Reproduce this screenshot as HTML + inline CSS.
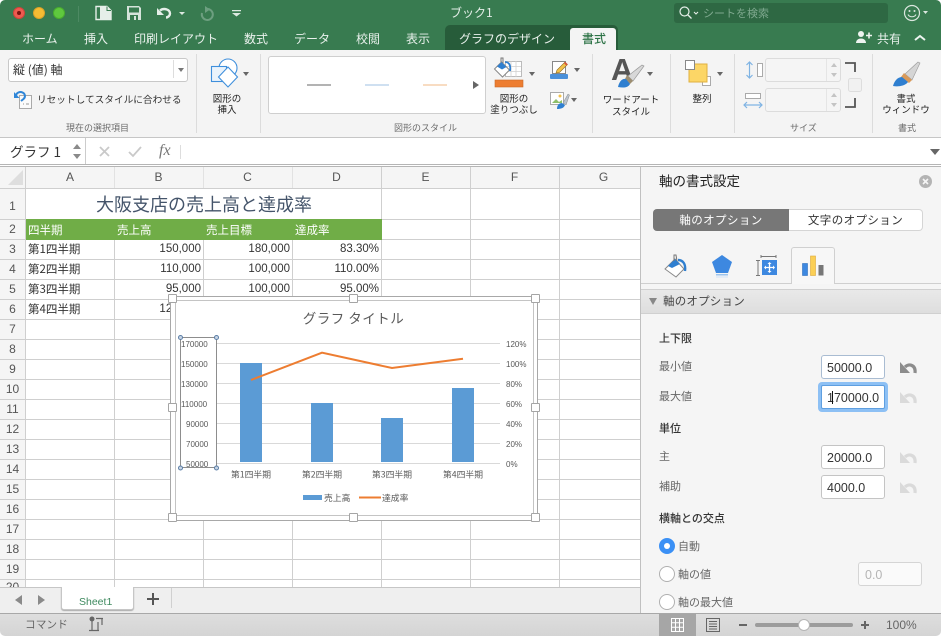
<!DOCTYPE html>
<html lang="ja"><head><meta charset="utf-8">
<style>
html,body{margin:0;padding:0;width:941px;height:636px;overflow:hidden;background:#fff}
*{box-sizing:border-box}
body{font-family:"Liberation Sans","Noto Sans CJK JP",sans-serif;position:relative;color:#333}
.a{position:absolute}
.t{position:absolute;white-space:nowrap;line-height:1}
.j{font-family:"Noto Sans CJK JP",sans-serif}
.tab{position:absolute;top:32px;font:12px/14px "Noto Sans CJK JP",sans-serif;color:#e9f1ec;white-space:nowrap}
.rl{position:absolute;font:9.500px/11px "Noto Sans CJK JP",sans-serif;color:#222;text-align:center;white-space:nowrap}
.gl{position:absolute;top:121px;font:9px/13px "Noto Sans CJK JP",sans-serif;color:#6a6a6a;white-space:nowrap}
.sep{position:absolute;top:54px;height:79px;width:1px;background:#dcdcdc}
.ch{position:absolute;top:167px;height:21px;font:12px/21px "Liberation Sans",sans-serif;color:#555;text-align:center}
.rn{position:absolute;left:0;width:25px;text-align:center;font:12px/20px "Liberation Sans",sans-serif;color:#555}
.c{position:absolute;font:11.500px/20px "Noto Sans CJK JP","Liberation Sans",sans-serif;color:#333;white-space:nowrap;height:20px}
.n{font-family:"Liberation Sans",sans-serif;text-align:right;width:87px;font-size:11.500px}
.lab{position:absolute;left:660px;font:11px/14px "Noto Sans CJK JP",sans-serif;color:#666;white-space:nowrap}
.hd{position:absolute;left:659px;font:500 11px/14px "Noto Sans CJK JP",sans-serif;color:#333;white-space:nowrap}
.inp{position:absolute;left:821px;width:64px;height:24px;background:#fff;border:1px solid #c4c4c4;border-radius:3px;font:12.500px/24px "Liberation Sans",sans-serif;color:#333;padding-left:5px;white-space:nowrap;overflow:hidden}
.hand{position:absolute;width:9px;height:9px;background:#fff;border:1px solid #a5a5a5;border-radius:1px}
.rad{position:absolute;left:659px;width:16px;height:16px;border-radius:50%;background:#fff;border:1px solid #b0b0b0}
.sp{position:absolute;width:76px;height:24px;background:#f5f5f5;border:1px solid #dcdcdc;border-radius:3px}
</style></head><body>

<!-- title + tab bar -->
<div class="a" style="left:0;top:0;width:941px;height:50px;background:#387b50;border-radius:5px 5px 0 0"></div>
<div class="a" style="left:13px;top:7px;width:12px;height:12px;border-radius:50%;background:#ee5a50;border:1px solid #d2433a"></div>
<div class="a" style="left:17px;top:11px;width:4px;height:4px;border-radius:50%;background:#7a1410"></div>
<div class="a" style="left:33px;top:7px;width:12px;height:12px;border-radius:50%;background:#f5bc33;border:1px solid #dca228"></div>
<div class="a" style="left:53px;top:7px;width:12px;height:12px;border-radius:50%;background:#5fc83e;border:1px solid #4aad2e"></div>
<div class="a" style="left:78px;top:6px;width:1px;height:16px;background:#4d8a63"></div>
<svg class="a" style="left:90px;top:0" width="160" height="28" viewBox="90 0 160 28" fill="none">
<path d="M100 6.500h7l4 4v9h-11z" fill="#e6efe9"/>
<path d="M96 6.500h11l4 4v9h-15z" stroke="#e6efe9" stroke-width="1.400"/><path d="M107 6.500v4h4" stroke="#387b50" stroke-width="1"/>
<path d="M98 9.500v.01M98 12.500v.01M98 15.500v.01" stroke="#e6efe9" stroke-width="1.400"/>
<path d="M127 6h12l2 2v12h-14z" fill="#d5e3da"/><rect x="129" y="7.500" width="10" height="5" fill="#387b50"/><rect x="130" y="15" width="8" height="5" fill="#387b50"/><rect x="134" y="16" width="2" height="4" fill="#d5e3da"/>
<path d="M160 10.500c4-3 10-1 10 3 0 2-2 4-4 4" stroke="#e6efe9" stroke-width="2.400"/><path d="M157 8v7h7z" fill="#e6efe9"/>
<path d="M179 12h6l-3 3z" fill="#dce8e0"/>
<path d="M202 13a5.500 5.500 0 1 0 6-4" stroke="#6d9f80" stroke-width="2"/><path d="M205 6v7l5-3.500z" fill="#6d9f80"/>
<path d="M232 10h9v1.200h-9zM232 13h9l-4.500 3.500z" fill="#dce8e0"/>
</svg>
<div class="t j" style="left:450px;top:7px;font-size:12px;color:#e5efe9">ブック1</div>
<div class="a" style="left:674px;top:3px;width:214px;height:20px;background:#2e6843;border-radius:3px"></div>
<svg class="a" style="left:678px;top:5px" width="22" height="16" fill="none"><circle cx="6.500" cy="6.500" r="4.500" stroke="#e6efe9" stroke-width="1.200"/><path d="M10 10l3.500 3.500" stroke="#e6efe9" stroke-width="1.300"/><path d="M16 7l2 2 2-2" stroke="#e6efe9" stroke-width="1.100"/></svg>
<div class="t j" style="left:703px;top:8px;font-size:11px;color:#7fa98f">シートを検索</div>
<svg class="a" style="left:903px;top:4px" width="34" height="18" fill="none"><circle cx="9" cy="9" r="7.500" stroke="#dbe7df" stroke-width="1.200"/><circle cx="6.500" cy="7" r="1" fill="#dbe7df"/><circle cx="11.500" cy="7" r="1" fill="#dbe7df"/><path d="M5 10.500c1.500 3 6.500 3 8 0" stroke="#dbe7df" stroke-width="1.100"/><path d="M20 7h5l-2.500 3z" fill="#dbe7df"/></svg>

<div class="tab" style="left:22px">ホーム</div>
<div class="tab" style="left:84px">挿入</div>
<div class="tab" style="left:134px">印刷レイアウト</div>
<div class="tab" style="left:244px">数式</div>
<div class="tab" style="left:294px">データ</div>
<div class="tab" style="left:356px">校閲</div>
<div class="tab" style="left:406px">表示</div>
<div class="a" style="left:445px;top:25px;width:173px;height:25px;background:#275c3a;border-radius:5px 5px 0 0"></div>
<div class="tab" style="left:459px">グラフのデザイン</div>
<div class="a" style="left:570px;top:28px;width:46px;height:22px;background:#f4f4f4;border-radius:3px 3px 0 0"></div>
<div class="tab" style="left:582px;color:#2f7448;font-weight:500">書式</div>
<svg class="a" style="left:855px;top:30px" width="18" height="14"><circle cx="6" cy="4" r="3" fill="#eef4f0"/><path d="M1 13c0-6 10-6 10 0z" fill="#eef4f0"/><path d="M11 5.500h6M14 2.500v6" stroke="#eef4f0" stroke-width="1.600"/></svg>
<div class="tab" style="left:877px">共有</div>
<svg class="a" style="left:913px;top:33px" width="14" height="9" fill="none"><path d="M2 7l5-4 5 4" stroke="#eef4f0" stroke-width="2"/></svg>

<!-- ribbon -->
<div class="a" style="left:0;top:50px;width:941px;height:88px;background:#f4f4f4;border-bottom:1px solid #c6c6c6"></div>
<div class="sep" style="left:196px"></div><div class="sep" style="left:260px"></div><div class="sep" style="left:592px"></div><div class="sep" style="left:670px"></div><div class="sep" style="left:734px"></div><div class="sep" style="left:872px"></div>

<div class="a" style="left:8px;top:58px;width:180px;height:24px;background:#fff;border:1px solid #c8c8c8;border-radius:3px"></div>
<div class="a" style="left:173px;top:60px;width:1px;height:18px;background:#ddd"></div>
<div class="a" style="left:178px;top:68px;border:3.500px solid transparent;border-top:4px solid #777;border-bottom:0"></div>
<div class="t j" style="left:13px;top:64px;font-size:12px;color:#333">縦 (値) 軸</div>
<svg class="a" style="left:13px;top:90px" width="20" height="20" fill="none"><rect x="6.500" y="5.500" width="12" height="13" fill="#fbfbfb" stroke="#aaa"/><path d="M10 14h1M13 14h3" stroke="#999"/><path d="M3 5.500a4.500 4 0 1 1 7.500 3.500L8 11" stroke="#2f86d8" stroke-width="2"/><path d="M1 2v6h5.500z" fill="#2f86d8"/></svg>
<div class="t j" style="left:37px;top:95px;font-size:9.670px;color:#333">リセットしてスタイルに合わせる</div>
<div class="gl" style="left:66px">現在の選択項目</div>

<svg class="a" style="left:208px;top:57px" width="40" height="34" fill="none"><circle cx="20" cy="11" r="9" fill="#fff" stroke="#3f8fdc" stroke-width="1.100"/><rect x="3.500" y="9.500" width="15" height="15" fill="#eaf3fb" stroke="#3f8fdc" stroke-width="1.100"/><path d="M20 10l9.500 10L20 30 10.500 20z" fill="#fff" stroke="#3f8fdc" stroke-width="1.100"/></svg>
<div class="a" style="left:243px;top:72px;border:3px solid transparent;border-top:4px solid #666;border-bottom:0"></div>
<div class="rl" style="left:208px;top:92.500px;width:38px">図形の<br>挿入</div>

<div class="a" style="left:268px;top:56px;width:218px;height:58px;background:#fff;border:1px solid #cfcfcf;border-radius:3px"></div>
<div class="a" style="left:307px;top:84px;width:24px;height:2px;background:#b3b3b3"></div>
<div class="a" style="left:365px;top:84px;width:24px;height:2px;background:#cfe0f1"></div>
<div class="a" style="left:423px;top:84px;width:24px;height:2px;background:#f8dcc2"></div>
<div class="a" style="left:473px;top:81px;border:4px solid transparent;border-left:6px solid #666;border-right:0;height:8px"></div>
<div class="gl" style="left:394px">図形のスタイル</div>

<svg class="a" style="left:493px;top:56px" width="34" height="32" fill="none"><rect x="12.500" y="5.500" width="16" height="15" fill="#fff" stroke="#bbb"/><path d="M12 10.500h16M12 15.500h16M18 5v16M23 5v16" stroke="#d0d0d0" stroke-width=".8"/><path d="M1.500 13l7-7 8 8-7 7z" fill="#fff" stroke="#888"/><path d="M4 10.500l4.500-4.500 5 5-4.500 2.500z" fill="#2f7fd0"/><path d="M8 6V2h2v5" stroke="#777"/><path d="M12 6c4 0 6 3 5 9" stroke="#2f7fd0" stroke-width="1.800"/><rect x="2" y="24" width="28" height="7" fill="#ed7d31" stroke="#c96a28" stroke-width=".6"/></svg>
<div class="a" style="left:529px;top:72px;border:3px solid transparent;border-top:4px solid #666;border-bottom:0"></div>
<div class="rl" style="left:483px;top:92.500px;width:62px">図形の<br>塗りつぶし</div>
<svg class="a" style="left:549px;top:59px" width="22" height="22" fill="none"><path d="M3.500 2.500h13v12h-13z" fill="#fff" stroke="#888"/><path d="M7 14l1-3 8-8 2.500 2.500-8 8z" fill="#f2c14a" stroke="#8a6a20" stroke-width=".6"/><path d="M15.500 3.500l2.500 2.500" stroke="#d5533d" stroke-width="1.800"/><rect x="1" y="15" width="18" height="5" rx="1" fill="#4a90d9"/></svg>
<div class="a" style="left:574px;top:68px;border:3px solid transparent;border-top:4px solid #666;border-bottom:0"></div>
<svg class="a" style="left:549px;top:90px" width="24" height="20" fill="none"><rect x="1.500" y="2.500" width="13" height="12" fill="#fff" stroke="#aaa"/><path d="M3 13l4-4 3 3 3-2v3z" fill="#8fbf6a"/><circle cx="11" cy="6" r="1.500" fill="#f2c14a"/><path d="M8 19c0-4 2-6 5-6l3 2c-1 3-4 4-8 4z" fill="#2f7fd0"/><path d="M14 13l5-9 1.500 1-3.500 10z" fill="#b9c2cc" stroke="#888" stroke-width=".5"/></svg>
<div class="a" style="left:571px;top:98px;border:3px solid transparent;border-top:4px solid #666;border-bottom:0"></div>

<div class="t" style="left:611px;top:54px;font-size:31px;line-height:31px;color:#555;font-weight:700">A</div>
<svg class="a" style="left:615px;top:62px" width="32" height="28"><path d="M13 14L27 3l2 1-11 15z" fill="#d8d8d8" stroke="#999" stroke-width=".7"/><path d="M12 13l6 6-3 3-5-5z" fill="#9c8d70"/><path d="M3 25c1-5 4-9 8-8l4 5c-2 4-7 4-12 3z" fill="#2f7fd0"/></svg>
<div class="a" style="left:647px;top:72px;border:3px solid transparent;border-top:4px solid #666;border-bottom:0"></div>
<div class="rl" style="left:596px;top:93px;width:70px;line-height:12px">ワードアート<br>スタイル</div>

<svg class="a" style="left:684px;top:59px" width="34" height="28"><rect x="18.500" y="17.500" width="8" height="9" fill="#fff" stroke="#aaa"/><rect x="5" y="5" width="18" height="18" fill="#fcd666" stroke="#e0b040"/><rect x="1.500" y="1.500" width="9" height="9" fill="#fff" stroke="#888"/></svg>
<div class="a" style="left:717px;top:72px;border:3px solid transparent;border-top:4px solid #666;border-bottom:0"></div>
<div class="rl" style="left:680px;top:93px;width:44px">整列</div>

<svg class="a" style="left:744px;top:60px" width="20" height="20" fill="none"><path d="M5.500 2v16M2.500 5l3-3 3 3M2.500 15l3 3 3-3" stroke="#7fb3e3" stroke-width="1.200"/><rect x="13.500" y="3.500" width="5" height="13" fill="#fff" stroke="#aaa"/></svg>
<svg class="a" style="left:743px;top:91px" width="22" height="20" fill="none"><rect x="2.500" y="2.500" width="15" height="5" fill="#fff" stroke="#aaa"/><path d="M1 14h18M4 11l-3 3 3 3M16 11l3 3-3 3" stroke="#7fb3e3" stroke-width="1.200"/></svg>
<div class="sp" style="left:765px;top:58px"></div><div class="sp" style="left:765px;top:88px"></div>
<div class="a" style="left:826px;top:59px;width:1px;height:22px;background:#e5e5e5"></div><div class="a" style="left:826px;top:89px;width:1px;height:22px;background:#e5e5e5"></div>
<svg class="a" style="left:829px;top:62px" width="10" height="48"><path d="M2 5l3-4 3 4zM2 11l3 4 3-4zM2 35l3-4 3 4zM2 41l3 4 3-4z" fill="#c4c4c4"/></svg>
<svg class="a" style="left:844px;top:60px" width="30" height="50" fill="none"><path d="M1 3h10v9M1 47h10v-9" stroke="#555" stroke-width="1.800"/><rect x="4.500" y="18.500" width="13" height="13" rx="2" fill="#f1f1f1" stroke="#ddd"/></svg>
<svg class="a" style="left:891px;top:60px" width="34" height="28"><path d="M14 14L27 2l2 1-8 17z" fill="#d5d5d5" stroke="#999" stroke-width=".6"/><path d="M13 13l8 7-3 3-8-6z" fill="#d99a5a"/><path d="M2 26c1-4 4-9 9-9l6 5c-3 4-10 5-15 4z" fill="#2f7fd0"/></svg>
<div class="rl" style="left:876px;top:92.500px;width:60px">書式<br>ウィンドウ</div>
<div class="gl" style="left:790px">サイズ</div>
<div class="gl" style="left:898px">書式</div>

<!-- formula bar -->
<div class="a" style="left:0;top:138px;width:941px;height:26px;background:#fff"></div>
<div class="a" style="left:85px;top:138px;width:1px;height:26px;background:#ccc"></div>
<div class="t j" style="left:10px;top:145px;font-size:13.500px;color:#333">グラフ 1</div>
<svg class="a" style="left:71px;top:143px" width="12" height="18"><path d="M2 6l4-5 4 5zM2 11l4 5 4-5z" fill="#8a8a8a"/></svg>
<svg class="a" style="left:96px;top:144px" width="50" height="16" fill="none"><path d="M4 3l9 9M13 3l-9 9" stroke="#c9c9c9" stroke-width="1.800"/><path d="M33 8l4 4 8-9" stroke="#c9c9c9" stroke-width="1.800"/></svg>
<div class="t" style="left:159px;top:142px;font:italic 16px 'Liberation Serif',serif;color:#777">fx</div>
<div class="a" style="left:180px;top:145px;width:1px;height:14px;background:#ddd"></div>
<div class="a" style="left:930px;top:149px;border:5px solid transparent;border-top:6px solid #666;border-bottom:0;height:6px"></div>
<div class="a" style="left:0;top:164px;width:941px;height:3px;background:#fff;border-top:1px solid #b5b5b5;border-bottom:1px solid #b5b5b5"></div>

<!-- sheet -->
<div class="a" style="left:0;top:167px;width:640px;height:420px;background:#fff;overflow:hidden">
<svg class="a" style="left:0;top:0" width="640" height="420">
<rect width="640" height="21" fill="#f5f5f5"/><rect width="25" height="420" fill="#f5f5f5"/>
<path d="M8 18L23 3v15z" fill="#dedede"/>
<g stroke="#cfcfcf" shape-rendering="crispEdges">
<path d="M0 21.500h640M25.500 0v420"/>
<path d="M381.500 0v420M470.500 0v420M559.500 0v420"/>
<path d="M114.500 0v21M203.500 0v21M292.500 0v21" stroke="#e2e2e2"/>
<path d="M114.500 72v348M203.500 72v348M292.500 72v348"/>
<path d="M381 52.500h259M0 72.500h640M0 92.500h640M0 112.500h640M0 132.500h640M0 152.500h640M0 172.500h640M0 192.500h640M0 212.500h640M0 232.500h640M0 252.500h640M0 272.500h640M0 292.500h640M0 312.500h640M0 332.500h640M0 352.500h640M0 372.500h640M0 392.500h640M0 412.500h640"/>
<path d="M0 52.500h25"/>
</g>
<rect x="26" y="52" width="356" height="21" fill="#70ad47"/>
</svg>
</div>
<div class="ch" style="left:26px;width:88px">A</div><div class="ch" style="left:114px;width:89px">B</div><div class="ch" style="left:203px;width:89px">C</div><div class="ch" style="left:292px;width:89px">D</div><div class="ch" style="left:381px;width:89px">E</div><div class="ch" style="left:470px;width:89px">F</div><div class="ch" style="left:559px;width:89px">G</div>
<div class="rn" style="top:196px">1</div><div class="rn" style="top:219px">2</div><div class="rn" style="top:239px">3</div><div class="rn" style="top:259px">4</div><div class="rn" style="top:279px">5</div><div class="rn" style="top:299px">6</div><div class="rn" style="top:319px">7</div><div class="rn" style="top:339px">8</div><div class="rn" style="top:359px">9</div><div class="rn" style="top:379px">10</div><div class="rn" style="top:399px">11</div><div class="rn" style="top:419px">12</div><div class="rn" style="top:439px">13</div><div class="rn" style="top:459px">14</div><div class="rn" style="top:479px">15</div><div class="rn" style="top:499px">16</div><div class="rn" style="top:519px">17</div><div class="rn" style="top:539px">18</div><div class="rn" style="top:559px">19</div><div class="rn" style="top:577px;height:10px;overflow:hidden">20</div>

<div class="t j" style="left:26px;top:195px;width:356px;text-align:center;font-size:18px;color:#44546a">大阪支店の売上高と達成率</div>
<div class="c" style="left:28px;top:220px;color:#fff">四半期</div><div class="c" style="left:117px;top:220px;color:#fff">売上高</div><div class="c" style="left:206px;top:220px;color:#fff">売上目標</div><div class="c" style="left:295px;top:220px;color:#fff">達成率</div>
<div class="c" style="left:28px;top:239px">第1四半期</div><div class="c" style="left:28px;top:259px">第2四半期</div><div class="c" style="left:28px;top:279px">第3四半期</div><div class="c" style="left:28px;top:299px">第4四半期</div>
<div class="c n" style="left:114px;top:239px">150,000</div><div class="c n" style="left:203px;top:239px">180,000</div><div class="c n" style="left:292px;top:239px">83.30%</div>
<div class="c n" style="left:114px;top:259px">110,000</div><div class="c n" style="left:203px;top:259px">100,000</div><div class="c n" style="left:292px;top:259px">110.00%</div>
<div class="c n" style="left:114px;top:279px">95,000</div><div class="c n" style="left:203px;top:279px">100,000</div><div class="c n" style="left:292px;top:279px">95.00%</div>
<div class="c n" style="left:114px;top:299px">125,000</div>

<!-- chart -->
<div class="a" style="left:170px;top:296px;width:368px;height:225px;background:#fff;border:1px solid #a8a8a8"></div>
<div class="a" style="left:175px;top:300px;width:359px;height:216px;background:#fff;border:1px solid #c4c4c4"></div>
<svg class="a" style="left:165px;top:290px" width="380" height="235">
<g stroke="#d9d9d9"><path d="M52 53.500h283M52 73.500h283M52 93.500h283M52 113.500h283M52 133.500h283M52 153.500h283M52 173.500h283"/></g>
<g fill="#5b9bd5"><rect x="75" y="73" width="22" height="99"/><rect x="146" y="113" width="22" height="59"/><rect x="216" y="128" width="22" height="44"/><rect x="287" y="98" width="22" height="74"/></g>
<polyline points="86,90 157,62.700 227,78 298,68.700" fill="none" stroke="#ed7d31" stroke-width="2"/>
<rect x="15.500" y="47.500" width="36" height="130" fill="none" stroke="#8d8d8d" stroke-width="1"/>
<g fill="#c9d6e6" stroke="#5b7ea6"><circle cx="15.500" cy="47.500" r="2"/><circle cx="51.500" cy="47.500" r="2"/><circle cx="15.500" cy="178" r="2"/><circle cx="51.500" cy="178" r="2"/></g>
<g font-family="Liberation Sans,sans-serif" font-size="8" fill="#595959">
<text x="16" y="57">170000</text><text x="16" y="77">150000</text><text x="16" y="97">130000</text><text x="16" y="117">110000</text><text x="21" y="137">90000</text><text x="21" y="157">70000</text><text x="21" y="177">50000</text>
<text x="341" y="57">120%</text><text x="341" y="77">100%</text><text x="341" y="97">80%</text><text x="341" y="117">60%</text><text x="341" y="137">40%</text><text x="341" y="157">20%</text><text x="341" y="177">0%</text></g>
<g font-family="Noto Sans CJK JP,sans-serif" font-size="8.800" fill="#595959" text-anchor="middle">
<text x="86" y="187.500">第1四半期</text><text x="157" y="187.500">第2四半期</text><text x="227" y="187.500">第3四半期</text><text x="298" y="187.500">第4四半期</text></g>
<text x="188.500" y="33.500" text-anchor="middle" font-family="Noto Sans CJK JP,sans-serif" font-size="13.500" fill="#595959" letter-spacing=".5">グラフ タイトル</text>
<rect x="138" y="205" width="19" height="5" fill="#5b9bd5"/><path d="M194 207.500h22" stroke="#ed7d31" stroke-width="2"/>
<g font-family="Noto Sans CJK JP,sans-serif" font-size="8.800" fill="#595959"><text x="159" y="211">売上高</text><text x="217" y="211">達成率</text></g>
</svg>
<div class="hand" style="left:168px;top:294px"></div><div class="hand" style="left:349px;top:294px"></div><div class="hand" style="left:531px;top:294px"></div>
<div class="hand" style="left:168px;top:403px"></div><div class="hand" style="left:531px;top:403px"></div>
<div class="hand" style="left:168px;top:513px"></div><div class="hand" style="left:349px;top:513px"></div><div class="hand" style="left:531px;top:513px"></div>

<!-- sheet tabs -->
<div class="a" style="left:0;top:587px;width:640px;height:26px;background:#efefef;border-top:1px solid #c6c6c6"></div>
<div class="a" style="left:15px;top:595px;border:5px solid transparent;border-right:7px solid #8a8a8a;border-left:0;height:10px"></div>
<div class="a" style="left:38px;top:595px;border:5px solid transparent;border-left:7px solid #8a8a8a;border-right:0;height:10px"></div>
<div class="a" style="left:61px;top:587px;width:73px;height:23px;background:#fff;border:1px solid #c6c6c6;border-top:0;border-radius:0 0 3px 3px;box-shadow:0 1px 1px #aaa"></div>
<div class="t" style="left:79px;top:597px;font-size:10.500px;color:#3f8a5f">Sheet1</div>
<svg class="a" style="left:146px;top:592px" width="14" height="14"><path d="M1 7h12M7 1v12" stroke="#555" stroke-width="2"/></svg>
<div class="a" style="left:171px;top:588px;width:1px;height:20px;background:#d0d0d0"></div>

<!-- pane -->
<div class="a" style="left:640px;top:167px;width:301px;height:446px;background:#f5f5f5;border-left:1px solid #c0c0c0"></div>
<div class="t j" style="left:659px;top:174px;font-size:13.500px;color:#222">軸の書式設定</div>
<svg class="a" style="left:918px;top:174px" width="15" height="15"><circle cx="7.500" cy="7.500" r="6.500" fill="#b4b4b4"/><path d="M5 5l5 5M10 5l-5 5" stroke="#f5f5f5" stroke-width="1.600"/></svg>
<div class="a" style="left:653px;top:209px;width:136px;height:22px;background:#777;border-radius:4px 0 0 4px"></div>
<div class="a" style="left:789px;top:209px;width:134px;height:22px;background:#fff;border:1px solid #d5d5d5;border-left:0;border-radius:0 4px 4px 0"></div>
<div class="t j" style="left:653px;top:215px;width:136px;text-align:center;font-size:11.500px;color:#fff;letter-spacing:.4px">軸のオプション</div>
<div class="t j" style="left:789px;top:215px;width:133px;text-align:center;font-size:11.500px;color:#333;letter-spacing:.4px">文字のオプション</div>

<div class="a" style="left:641px;top:283px;width:300px;height:1px;background:#cfcfcf"></div>
<div class="a" style="left:791px;top:247px;width:44px;height:37px;background:#f7f7f7;border:1px solid #d0d0d0;border-bottom:0;border-radius:3px 3px 0 0"></div>
<svg class="a" style="left:662px;top:253px" width="30" height="26" fill="none"><path d="M3 16l10-10 9 10-8 8z" fill="#fff" stroke="#888"/><path d="M6 13l7-7 5 5-8 4z" fill="#2f7fd0"/><path d="M12 8V2h2l1 6" stroke="#777"/><path d="M16 7c5 0 8 4 7 11" stroke="#2f7fd0" stroke-width="2.400"/></svg>
<svg class="a" style="left:711px;top:253px" width="22" height="26"><path d="M11 2l10 7-4 11H5L1 9z" fill="#3d88e0"/><rect x="5" y="21" width="12" height="1.500" fill="#9cc4ee"/><rect x="5" y="23.500" width="12" height="1" fill="#d3e4f6"/></svg>
<svg class="a" style="left:755px;top:255px" width="24" height="22" fill="none"><path d="M6 1.500h15M6 0v3M21 0v3M1 5.500h4M1 20.500h4M3 5.500v15" stroke="#777"/><rect x="7" y="5" width="15" height="15" fill="#3d88e0"/><path d="M14.500 8v9M10 12.500h9" stroke="#fff" stroke-width="1.300"/><path d="M14.500 7l-2 2h4zM14.500 18l-2-2h4zM9 12.500l2-2v4zM20 12.500l-2-2v4z" fill="#fff"/></svg>
<svg class="a" style="left:801px;top:255px" width="24" height="22"><rect x="1.500" y="8.500" width="5" height="12" fill="#3d88e0" stroke="#2e6fbd" stroke-width=".6"/><rect x="9.500" y="1" width="5" height="19.500" fill="#fbcf55" stroke="#dca93a" stroke-width=".6"/><rect x="17.500" y="10" width="5" height="10.500" fill="#777"/></svg>

<div class="a" style="left:641px;top:289px;width:300px;height:25px;background:linear-gradient(#e9e9e9,#dedede);border-top:1px solid #d0d0d0;border-bottom:1px solid #d0d0d0"></div>
<div class="a" style="left:649px;top:298px;border:4px solid transparent;border-top:7px solid #888;border-bottom:0;height:7px;width:8px"></div>
<div class="t j" style="left:663px;top:296px;font-size:11.500px;color:#444;letter-spacing:.2px">軸のオプション</div>

<div class="hd" style="top:331px">上下限</div>
<div class="lab" style="left:659px;top:359px">最小値</div>
<div class="inp" style="top:355px;border-color:#a9bcd2">50000.0</div>
<div class="lab" style="left:659px;top:389px">最大値</div>
<div class="a" style="left:818px;top:382px;width:70px;height:30px;background:#8dc0f4;border-radius:4px"></div>
<div class="inp" style="top:385px;border-color:#5f9fe0;border-radius:2px">170000.0</div>
<div class="a" style="left:832px;top:391px;width:1px;height:13px;background:#111"></div>
<div class="hd" style="top:421px">単位</div>
<div class="lab" style="left:659px;top:449px">主</div>
<div class="inp" style="top:445px">20000.0</div>
<div class="lab" style="left:659px;top:479px">補助</div>
<div class="inp" style="top:475px">4000.0</div>
<svg class="a" style="left:899px;top:361px" width="20" height="14" fill="none"><path d="M6 6c4-4 11-2 10 6" stroke="#8c8c8c" stroke-width="3.200"/><path d="M1 1v11h10z" fill="#8c8c8c"/></svg>
<svg class="a" style="left:899px;top:391px" width="20" height="14" fill="none"><path d="M6 6c4-4 11-2 10 6" stroke="#dadada" stroke-width="3.200"/><path d="M1 1v11h10z" fill="#dadada"/></svg>
<svg class="a" style="left:899px;top:451px" width="20" height="14" fill="none"><path d="M6 6c4-4 11-2 10 6" stroke="#dadada" stroke-width="3.200"/><path d="M1 1v11h10z" fill="#dadada"/></svg>
<svg class="a" style="left:899px;top:481px" width="20" height="14" fill="none"><path d="M6 6c4-4 11-2 10 6" stroke="#dadada" stroke-width="3.200"/><path d="M1 1v11h10z" fill="#dadada"/></svg>
<div class="hd" style="top:511px">横軸との交点</div>
<div class="rad" style="top:538px;background:#3b90f5;border-color:#3b90f5"></div>
<div class="a" style="left:664px;top:543px;width:6px;height:6px;border-radius:50%;background:#fff"></div>
<div class="lab" style="left:678px;top:539px">自動</div>
<div class="rad" style="top:566px"></div>
<div class="lab" style="left:678px;top:567px">軸の値</div>
<div class="inp" style="top:562px;left:858px;border-color:#d5d5d5;color:#b5b5b5;background:#fafafa;padding-left:6px">0.0</div>
<div class="rad" style="top:594px"></div>
<div class="lab" style="left:678px;top:595px">軸の最大値</div>

<!-- status bar -->
<div class="a" style="left:0;top:613px;width:941px;height:23px;background:linear-gradient(#dedede,#d4d4d4);border-top:1px solid #a8a8a8;border-radius:0 0 5px 5px"></div>
<div class="t j" style="left:25px;top:620px;font-size:10.700px;color:#666">コマンド</div>
<svg class="a" style="left:88px;top:616px" width="18" height="17" fill="none"><circle cx="4" cy="3" r="2.500" fill="#666"/><path d="M4 5v9M1 14.500h10M8 2.500h7M14 3v6M10 6v8" stroke="#666" stroke-width="1.200"/></svg>
<div class="a" style="left:659px;top:614px;width:37px;height:22px;background:#a6a6a6"></div>
<svg class="a" style="left:671px;top:618px" width="13" height="14" fill="none"><path d="M.5.500h12v13H.5zM4.500.500v13M8.500.500v13M.5 4.800h12M.5 9.200h12" stroke="#fff"/></svg>
<svg class="a" style="left:706px;top:618px" width="14" height="14" fill="none"><path d="M.5.500h13v13H.5z" stroke="#666"/><path d="M3 3.500h8M3 6h8M3 8.500h8M3 11h8" stroke="#666"/></svg>
<div class="a" style="left:739px;top:624px;width:8px;height:2px;background:#666"></div>
<div class="a" style="left:755px;top:623px;width:98px;height:4px;background:#9c9c9c;border-radius:2px"></div>
<div class="a" style="left:798px;top:619px;width:12px;height:12px;background:#fff;border:1px solid #b5b5b5;border-radius:50%"></div>
<svg class="a" style="left:860px;top:620px" width="10" height="10"><path d="M1 5h8M5 1v8" stroke="#666" stroke-width="2"/></svg>
<div class="t" style="left:886px;top:619px;font-size:12px;color:#666">100%</div>

</body></html>
